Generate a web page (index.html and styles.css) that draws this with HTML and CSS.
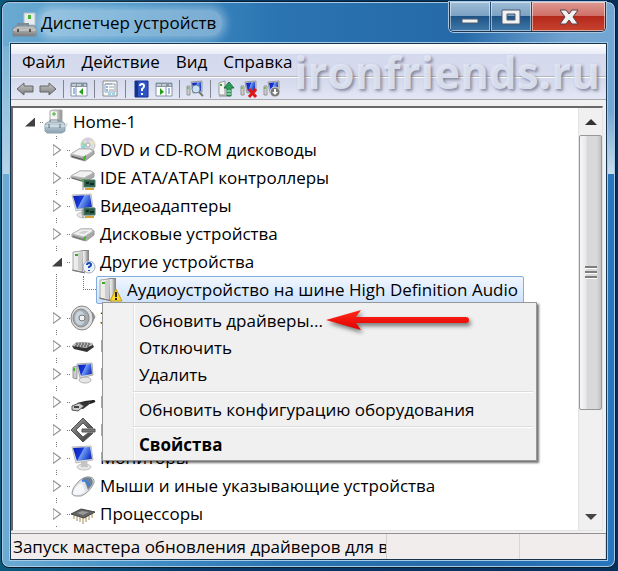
FILE: index.html
```html
<!DOCTYPE html>
<html lang="ru">
<head>
  <meta charset="UTF-8" />
  <meta name="viewport" content="width=device-width, initial-scale=1.0" />
  <title>Диспетчер устройств</title>
  <link rel="stylesheet" href="styles.css">
</head>
<body>
  <svg class="sprite" aria-hidden="true">
    <defs>
      <linearGradient id="metal" x1="0" x2="1"><stop offset="0" stop-color="#fafafa"/><stop offset=".5" stop-color="#d8d8d8"/><stop offset="1" stop-color="#8b8b8b"/></linearGradient>
      <linearGradient id="screen" x1="0" x2="1" y2=".4"><stop offset="0" stop-color="#0a1fb0"/><stop offset=".5" stop-color="#1638d8"/><stop offset=".55" stop-color="#6f9cf5"/><stop offset="1" stop-color="#1a3cc8"/></linearGradient>
      <linearGradient id="box" x1="0" x2="0" y2="1"><stop offset="0" stop-color="#c9d8e0"/><stop offset="1" stop-color="#8ba3b1"/></linearGradient>
      <linearGradient id="gray" x1="0" x2="0" y2="1"><stop offset="0" stop-color="#c9c9c9"/><stop offset="1" stop-color="#7c7c7c"/></linearGradient>
      <linearGradient id="dark" x1="0" x2="1" y2="1"><stop offset="0" stop-color="#a0a0a0"/><stop offset="1" stop-color="#333"/></linearGradient>
      <linearGradient id="red" x1="0" x2="0" y2="1"><stop offset="0" stop-color="#ff2a1a"/><stop offset="1" stop-color="#e00000"/></linearGradient>
    </defs>
    <symbol id="i-computer" viewBox="0 0 26 26">
      <path d="M7 2l3-1h9v14H7z" fill="url(#metal)" stroke="#aaa"/>
      <path d="M8 3h6v11H8z" fill="#f4f4f4"/>
      <path d="M9 5h4M11 3v4" stroke="#3fae2a" stroke-width="1"/>
      <path d="M7 13v-2h9v2" fill="none" stroke="#6f8591" stroke-width="1"/>
      <path d="M2 15l3-2h15l2 2v7l-3 2H4l-2-2z" fill="url(#box)" stroke="#8ba0ab"/>
      <path d="M2 17h20" stroke="#e8f0f4"/>
      <path d="M6 15v4M17 15v4" stroke="#5c717d" stroke-width="1"/>
      <path d="M22 15l3-1-2 5z" fill="#d9d9d9"/>
    </symbol>
    <symbol id="i-drive" viewBox="0 0 26 26">
      <path d="M2 13l9-5h11l2 2v4l-8 6-4-1-10-3z" fill="#a9a9a9" stroke="#999"/>
      <path d="M2 13l9-5h11l1 2-9 6z" fill="#f0f0f0" stroke="#bbb"/>
      <path d="M8 12l5-2h6l-5 3z" fill="#d0d0d0"/>
      <path d="M3 15l10 3v1L3 16z" fill="#666"/>
      <path d="M13 17l3-2v3l-3 2z" fill="#41b82a"/>
    </symbol>
    <symbol id="i-dvd" viewBox="0 0 26 26">
      <circle cx="18" cy="8" r="7" fill="#ddd" stroke="#c5c5c5"/>
      <path d="M18 8l-6-3 1 7z" fill="#9ad7a5"/><path d="M18 8l5-5 2 4z" fill="#e9e3c1"/><path d="M18 8l-3-7h5z" fill="#d9cbe2"/><path d="M18 8l-7 1 2 4z" fill="#8ad5e0"/>
      <circle cx="18" cy="8" r="2" fill="#fff" stroke="#aaa"/>
      <path d="M1 17l8-5h11l4 2v3l-9 7-14-4z" fill="#aaa" stroke="#909090"/>
      <path d="M1 17l8-5h11l3 2-9 6z" fill="#f3f3f3" stroke="#bbb"/>
      <path d="M2 19l11 3v1L2 20z" fill="#4a4a4a"/>
      <path d="M13 20l3-2v4l-3 2z" fill="#41b82a"/>
    </symbol>
    <symbol id="i-chip" viewBox="0 0 26 26">
      <path d="M14 15h11v7H14z" fill="#2b5e4a" stroke="#4b7a66"/>
      <path d="M16 17h3v2h-3zM20 18h4v2h-4z" fill="#142e24"/>
      <path d="M15 23h9v2h-9z" fill="#d8a13a"/>
      <path d="M13 14v11" stroke="#888"/>
    </symbol>
    <symbol id="i-ide" viewBox="0 0 26 26">
      <path d="M1 11l9-5h11l3 2v4l-9 5-14-4z" fill="#aaa" stroke="#a0a0a0"/>
      <path d="M1 11l9-5h11l2 2-9 5z" fill="#f2f2f2" stroke="#bbb"/>
      <path d="M2 13l10 3" stroke="#666"/><path d="M12 14h3v3h-3z" fill="#41c52a"/>
      <use href="#i-chip"/>
    </symbol>
    <symbol id="i-monitor" viewBox="0 0 26 26">
      <ellipse cx="14" cy="22" rx="7" ry="3" fill="#e6e6e6" stroke="#c5c5c5"/>
      <path d="M11 15h6l1 7h-7z" fill="#c4c4c4"/>
      <path d="M2 2l19-1 2 14-17 3z" fill="#e2e2e2" stroke="#bbb"/>
      <path d="M3 3l17-1 2 12-15 2z" fill="url(#screen)"/>
    </symbol>
    <symbol id="i-video" viewBox="0 0 26 26">
      <use href="#i-monitor"/><use href="#i-chip"/>
    </symbol>
    <symbol id="i-tower" viewBox="0 0 26 26">
      <path d="M3 4l10-3h6v20l-5 3-11-2z" fill="#888"/>
      <path d="M12 2h6v18l-5 3z" fill="url(#metal)"/>
      <path d="M3 3l9-1v21l-9-2z" fill="#ececec" stroke="#aaa"/>
      <path d="M8 4l4-1v19l-4-1z" fill="#cdcdcd"/>
      <path d="M5 5h3v2H5z" fill="#39a824"/>
      <path d="M2 21l13 3" stroke="#777"/>
    </symbol>
    <symbol id="i-unknown" viewBox="0 0 26 26">
      <use href="#i-tower"/>
      <circle cx="19" cy="18" r="6" fill="#eef3fb" stroke="#a5afbf"/>
      <path d="M17 16q0-2 2-2t2 2q0 1-2 2v1M19 21v1" fill="none" stroke="#1748b8" stroke-width="2"/>
    </symbol>
    <symbol id="i-warning" viewBox="0 0 26 26">
      <use href="#i-tower"/>
      <path d="M19 12l6 12H13z" fill="#ffd92e" stroke="#c39a10" stroke-linejoin="round"/>
      <path d="M19 15v5M19 21v2" stroke="#222" stroke-width="2"/>
    </symbol>
    <symbol id="i-speaker" viewBox="0 0 26 26">
      <path d="M15 3l8 5 2 4-3 6-8 5z" fill="#888" stroke="#999"/>
      <ellipse cx="12" cy="13" rx="11" ry="12" fill="#dedede" stroke="#888"/>
      <ellipse cx="11" cy="13" rx="8" ry="9" fill="#a3abb5" stroke="#888"/>
      <ellipse cx="10" cy="13" rx="5" ry="7" fill="#c9d3dc"/>
      <circle cx="12" cy="13" r="3" fill="#eef2f5" stroke="#777"/>
    </symbol>
    <symbol id="i-keyboard" viewBox="0 0 26 26">
      <path d="M2 13l5-4 15 1 2 4-7 5-13-3z" fill="#333"/>
      <path d="M2 13l5-4 15 1 1 2-7 3z" fill="#bbb"/>
      <path d="M6 11h14M5 13h14" stroke="#333" stroke-dasharray="2 1"/>
    </symbol>
    <symbol id="i-pc" viewBox="0 0 26 26">
      <path d="M3 6l4-1v13l-4-1z" fill="#ccc" stroke="#999"/><path d="M3 7h2v3H3z" fill="#41b82a"/>
      <ellipse cx="15" cy="19" rx="6" ry="3" fill="#e6e6e6" stroke="#b0b0b0"/>
      <path d="M7 3l15-1 1 12-13 3z" fill="#d9d9d9" stroke="#aaa"/>
      <path d="M8 4l13-1 1 10-11 2z" fill="url(#screen)"/>
    </symbol>
    <symbol id="i-usb" viewBox="0 0 26 26">
      <path d="M15 13l9-1M20 14l5-2" stroke="#222" stroke-width="2"/>
      <path d="M7 14l8-2 6 2-8 6-6-1z" fill="#333"/>
      <path d="M2 17l7-3 5 3-6 5-6-1z" fill="#ccc" stroke="#555"/>
      <path d="M4 18h5" stroke="#444" stroke-width="2"/>
    </symbol>
    <symbol id="i-storage" viewBox="0 0 26 26">
      <path d="M13 1l10 10h-5l-5-5-7 7 7 7 5-4h5L13 25 1 13z" fill="url(#dark)" stroke="#555"/>
      <path d="M12 12h13v3H12z" fill="#777" stroke="#555"/>
    </symbol>
    <symbol id="i-mouse" viewBox="0 0 26 26">
      <path d="M2 20q0-5 6-11 6-6 12-5 5 1 4 6-3 7-9 11-4 3-8 2-5 0-5-3z" fill="#dfe2e7" stroke="#999"/>
      <path d="M12 6q5-3 9-1 3 3 1 7l-4 5-3-8z" fill="#6f8294"/>
      <path d="M12 8q5-2 7 5" fill="none" stroke="#3d7de0" stroke-width="2"/>
      <path d="M3 19q3-7 9-9l3 8q-4 4-8 4-4 0-4-3z" fill="#f6f7f9"/>
    </symbol>
    <symbol id="i-cpu" viewBox="0 0 26 26">
      <path d="M4 14v4M7 15v5M10 16v5M13 17v6M16 16v5M19 15v4M22 13v4" stroke="#a88950"/>
      <path d="M1 13l10-5 14 3-11 6z" fill="#666" stroke="#444"/>
      <path d="M7 12l5-2 7 1-6 3z" fill="#999"/>
    </symbol>
    <symbol id="t-back" viewBox="0 0 18 18">
      <path d="M1 9l7-6v3h9v6H8v3z" fill="url(#gray)" stroke="#666" stroke-linejoin="round"/>
    </symbol>
    <symbol id="t-pane" viewBox="0 0 18 18">
      <path d="M1 3h16v13H1z" fill="#fff" stroke="#8794a3"/><path d="M1 3h16v4H1z" fill="#8794a3"/><path d="M2 5h10M14 5h2" stroke="#fff" stroke-dasharray="4 1"/>
      <path d="M6 7v9" stroke="#8794a3"/><path d="M3 9h2M3 11h2M3 13h2" stroke="#3577c8"/><path d="M13 8v7l-4-3z" fill="#23a01b"/>
    </symbol>
    <symbol id="t-props" viewBox="0 0 18 18">
      <path d="M2 1h14v15H2z" fill="#f8f8f8" stroke="#8b8b8b"/><path d="M4 4h10v8H4z" fill="#fff" stroke="#8ba2bb"/>
      <path d="M4 4h7" stroke="#99a"/><path d="M5 7h2M5 10h2" stroke="#1b6fc8"/><path d="M8 7h5M8 10h5" stroke="#99a"/><path d="M7 14h3M11 14h3" stroke="#3ab5dc"/>
    </symbol>
    <symbol id="t-help" viewBox="0 0 18 18">
      <path d="M3 1h13v16H3z" fill="#2c54c4" stroke="#16318c"/><path d="M3 1h3v16H3z" fill="#16318c"/>
      <path d="M8 6q0-2 2-2t2 2q0 2-2 3v2M10 13v2" fill="none" stroke="#fff" stroke-width="2"/>
    </symbol>
    <symbol id="t-action" viewBox="0 0 18 18">
      <path d="M1 3h16v13H1z" fill="#fff" stroke="#8794a3"/><path d="M1 3h16v4H1z" fill="#8794a3"/><path d="M2 5h10M14 5h2" stroke="#fff" stroke-dasharray="4 1"/>
      <path d="M11 7v9" stroke="#8794a3"/><path d="M13 9h2M13 11h2M13 13h2" stroke="#3577c8"/><path d="M5 8v7l4-3z" fill="#23a01b"/>
    </symbol>
    <symbol id="t-pc" viewBox="0 0 18 18">
      <path d="M1 6h3v9H1z" fill="#ccc" stroke="#999"/><path d="M2 7v2" stroke="#25b51a"/>
      <path d="M5 2l11-1v11l-9 1z" fill="#ccc" stroke="#999"/><path d="M6 3l9-1v9l-7 1z" fill="url(#screen)"/>
    </symbol>
    <symbol id="t-scan" viewBox="0 0 18 18">
      <use href="#t-pc"/><circle cx="10" cy="9" r="4" fill="#c9e2f7" stroke="#6f7f94"/><path d="M13 12l4 4" stroke="#777" stroke-width="2"/>
    </symbol>
    <symbol id="t-update" viewBox="0 0 18 18">
      <path d="M2 3l6-2v14H2z" fill="#f4f4f4" stroke="#999"/><path d="M3 4h2v2H3z" fill="#34a824"/><path d="M2 16h8" stroke="#888"/>
      <path d="M12 2l5 6h-3v8h-4V8H7z" fill="#2f9e5a" stroke="#17713b"/><path d="M10 11h4M10 14h4" stroke="#d6f3df"/>
    </symbol>
    <symbol id="t-remove" viewBox="0 0 18 18">
      <use href="#t-pc"/><path d="M9 9l7 8M16 9l-7 8" stroke="#e01616" stroke-width="3"/>
    </symbol>
    <symbol id="t-disable" viewBox="0 0 18 18">
      <use href="#t-pc"/><circle cx="12" cy="12" r="5" fill="#777" stroke="#ddd"/><path d="M11 9h2v3h2l-3 3-3-3h2z" fill="#fff"/>
    </symbol>
  </svg>

  <div class="window">
    <header class="titlebar">
      <svg class="app-icon" viewBox="0 0 26 26" aria-hidden="true">
        <path d="M12 2h11v12H12z" fill="#e8ecef" stroke="#b5bcc0"/><path d="M16 4h3v4h-3z" fill="#4ab331"/>
        <path d="M6 15v-2h10v2" fill="none" stroke="#808a90" stroke-width="2"/>
        <path d="M1 17l4-2h17l2 3v7H1z" fill="url(#gray)" stroke="#7c878d"/><path d="M1 19h23" stroke="#d5d5d5"/><path d="M6 18v3M18 18v3" stroke="#555" stroke-width="2"/>
      </svg>
      <h1>Диспетчер устройств</h1>
      <div class="caption-buttons">
        <button class="caption-btn" aria-label="Свернуть">
          <svg width="20" height="16" viewBox="0 0 20 16"><path d="M2 10h16v4H2z" fill="#f2f2f2" stroke="#4a5a70"/></svg>
        </button>
        <button class="caption-btn" aria-label="Развернуть">
          <svg width="20" height="16" viewBox="0 0 20 16"><path d="M1 1h18v14H1zM6 5v6h8V5z" fill="#f2f2f2" fill-rule="evenodd" stroke="#4a5a70"/></svg>
        </button>
        <button class="caption-btn close" aria-label="Закрыть">
          <svg width="20" height="16" viewBox="0 0 20 16"><path d="M1 1h6l3 4 3-4h6l-5 7 5 7h-6l-3-4-3 4H1l5-7z" fill="#f2f2f2" stroke="#58404c"/></svg>
        </button>
      </div>
    </header>

    <main class="client">
      <nav class="menubar">
        <button>Файл</button>
        <button>Действие</button>
        <button>Вид</button>
        <button>Справка</button>
      </nav>
      <div class="toolbar">
        <button aria-label="Назад"><svg><use href="#t-back"/></svg></button>
        <button aria-label="Вперед"><svg class="flip"><use href="#t-back"/></svg></button>
        <span class="divider"></span>
        <button aria-label="Дерево консоли"><svg><use href="#t-pane"/></svg></button>
        <span class="divider"></span>
        <button aria-label="Свойства"><svg><use href="#t-props"/></svg></button>
        <span class="divider"></span>
        <button aria-label="Справка"><svg><use href="#t-help"/></svg></button>
        <button aria-label="Панель действий"><svg><use href="#t-action"/></svg></button>
        <span class="divider"></span>
        <button aria-label="Обновить конфигурацию"><svg><use href="#t-scan"/></svg></button>
        <span class="divider"></span>
        <button aria-label="Обновить драйверы"><svg><use href="#t-update"/></svg></button>
        <button aria-label="Удалить"><svg><use href="#t-remove"/></svg></button>
        <button aria-label="Отключить"><svg><use href="#t-disable"/></svg></button>
      </div>

      <div class="tree-panel">
        <div class="tree">
          <div class="row root">
            <button class="expander open" aria-label="Свернуть"></button>
            <span class="stub"></span>
            <span class="item"><svg><use href="#i-computer"/></svg>Home-1</span>
          </div>
          <ul class="branch">
            <li><div class="row"><button class="expander" aria-label="Развернуть"></button><span class="stub"></span><span class="item"><svg><use href="#i-dvd"/></svg>DVD и CD-ROM дисководы</span></div></li>
            <li><div class="row"><button class="expander" aria-label="Развернуть"></button><span class="stub"></span><span class="item"><svg><use href="#i-ide"/></svg>IDE ATA/ATAPI контроллеры</span></div></li>
            <li><div class="row"><button class="expander" aria-label="Развернуть"></button><span class="stub"></span><span class="item"><svg><use href="#i-video"/></svg>Видеоадаптеры</span></div></li>
            <li><div class="row"><button class="expander" aria-label="Развернуть"></button><span class="stub"></span><span class="item"><svg><use href="#i-drive"/></svg>Дисковые устройства</span></div></li>
            <li>
              <div class="row"><button class="expander open" aria-label="Свернуть"></button><span class="stub"></span><span class="item"><svg><use href="#i-unknown"/></svg>Другие устройства</span></div>
              <div class="row child">
                <span class="elbow"></span>
                <span class="item selected"><svg><use href="#i-warning"/></svg>Аудиоустройство на шине High Definition Audio</span>
                <div class="context-menu">
                  <button>Обновить драйверы...</button>
                  <button>Отключить</button>
                  <button>Удалить</button>
                  <hr>
                  <button>Обновить конфигурацию оборудования</button>
                  <hr>
                  <button class="default">Свойства</button>
                  <svg class="arrow" viewBox="0 0 150 30" aria-hidden="true"><path d="M2 13L37 3l-5 7h110q3 0 3 3t-3 3H32l5 7z" fill="url(#red)"/></svg>
                </div>
              </div>
            </li>
            <li><div class="row"><button class="expander" aria-label="Развернуть"></button><span class="stub"></span><span class="item"><svg><use href="#i-speaker"/></svg>Звуковые устройства</span></div></li>
            <li><div class="row"><button class="expander" aria-label="Развернуть"></button><span class="stub"></span><span class="item"><svg><use href="#i-keyboard"/></svg>Клавиатуры</span></div></li>
            <li><div class="row"><button class="expander" aria-label="Развернуть"></button><span class="stub"></span><span class="item"><svg><use href="#i-pc"/></svg>Компьютер</span></div></li>
            <li><div class="row"><button class="expander" aria-label="Развернуть"></button><span class="stub"></span><span class="item"><svg><use href="#i-usb"/></svg>Контроллеры USB</span></div></li>
            <li><div class="row"><button class="expander" aria-label="Развернуть"></button><span class="stub"></span><span class="item"><svg><use href="#i-storage"/></svg>Контроллеры</span></div></li>
            <li><div class="row"><button class="expander" aria-label="Развернуть"></button><span class="stub"></span><span class="item"><svg><use href="#i-monitor"/></svg>Мониторы</span></div></li>
            <li><div class="row"><button class="expander" aria-label="Развернуть"></button><span class="stub"></span><span class="item"><svg><use href="#i-mouse"/></svg>Мыши и иные указывающие устройства</span></div></li>
            <li><div class="row"><button class="expander" aria-label="Развернуть"></button><span class="stub"></span><span class="item"><svg><use href="#i-cpu"/></svg>Процессоры</span></div></li>
          </ul>
        </div>
        <div class="scrollbar">
          <button class="scroll-btn" aria-label="Вверх"><svg viewBox="0 0 12 6"><path d="M0 6l6-6 6 6z" fill="#333"/></svg></button>
          <div class="thumb"><i></i><i></i><i></i></div>
          <div class="track"></div>
          <button class="scroll-btn" aria-label="Вниз"><svg viewBox="0 0 12 6"><path d="M0 0l6 6 6-6z" fill="#444"/></svg></button>
        </div>
      </div>

      <footer class="statusbar">
        <span class="status-text">Запуск мастера обновления драйверов для в</span>
        <span class="status-cell"></span>
        <span class="status-cell small"></span>
      </footer>
    </main>
    <div class="watermark">ironfriends.ru</div>
  </div>
</body>
</html>
```
FILE: styles.css
```css
* {
  box-sizing: border-box;
}
body {
  margin: 0;
  height: 100vh;
  padding: 1px 2px 3px 1px;
  display: flex;
  font-family: 'Open Sans', 'Noto Sans', sans-serif;
  font-size: 17px;
  line-height: 28px;
  color: #000;
  background: linear-gradient(to right, #0c5a7c, #063a68 30%, #06305c);
}
button {
  font: inherit;
  color: inherit;
  background: none;
  border: none;
  padding: 0;
}
.sprite {
  position: absolute;
  width: 0;
  height: 0;
}
.window {
  position: relative;
  flex: 1;
  min-width: 0;
  display: flex;
  flex-direction: column;
  padding: 0 8px 7px;
  border: 1px solid #0b1c2c;
  border-radius: 8px;
  box-shadow: inset 0 0 0 1px #a5cbe6;
  background:
    linear-gradient(rgba(255, 255, 255, 0.35), rgba(255, 255, 255, 0.35) 50%, rgba(255, 255, 255, 0.75)) right 44px / 9px 128px no-repeat,
    linear-gradient(rgba(255, 255, 255, 0.1), rgba(255, 255, 255, 0.5)) left 44px / 9px 128px no-repeat,
    linear-gradient(115deg, transparent 75%, rgba(255, 255, 255, 0.35) 92%) top / 100% 44px no-repeat,
    linear-gradient(to right, #6cabd2, #4593c8 20%, #2b74b2 45%, #2569a8 75%, #2876bd);
}

/* title bar */
.titlebar {
  display: flex;
  align-items: flex-start;
  height: 41px;
  flex-shrink: 0;
}
.app-icon {
  width: 26px;
  height: 26px;
  margin: 9px 3px 0 2px;
}
.titlebar h1 {
  margin: 8px 0 0;
  padding-right: 6px;
  font-size: 17px;
  font-weight: 400;
  line-height: 26px;
  white-space: nowrap;
  border-radius: 12px;
  background: rgba(255, 255, 255, 0.35);
  box-shadow: 0 0 8px 4px rgba(255, 255, 255, 0.35);
}
.caption-buttons {
  display: flex;
  height: 30px;
  margin-left: auto;
  margin-right: 1px;
  border: 1px solid #1d3550;
  border-top: none;
  border-radius: 0 0 5px 5px;
  box-shadow: 0 0 0 1px #a8c6e0;
  overflow: hidden;
}
.caption-btn {
  width: 41px;
  display: flex;
  align-items: center;
  justify-content: center;
  border-right: 1px solid #234a70;
  box-shadow: inset 0 0 0 1px rgba(255, 255, 255, 0.5);
  background: linear-gradient(#9fbdd6, #7ba1c3 48%, #1f5385 50%, #4079ab);
}
.caption-btn.close {
  width: 73px;
  border-right: none;
  background: linear-gradient(#dd9a92, #cf6f66 48%, #b4291c 50%, #c8432f);
}

.client {
  flex: 1;
  min-height: 0;
  display: flex;
  flex-direction: column;
  border: 1px solid #16344e;
  box-shadow: 0 0 0 1px #a5cbe6;
  background: #f0f0f0;
}

/* menu and toolbar */
.menubar {
  display: flex;
  gap: 16px;
  height: 33px;
  flex-shrink: 0;
  padding: 3px 11px 0;
  border-bottom: 1px solid #b5b5b5;
  background: linear-gradient(#fff, #e8ecf7 10px, #d4d9ed 10px, #d6dbee);
}
.toolbar {
  display: flex;
  align-items: center;
  gap: 5px;
  height: 23px;
  flex-shrink: 0;
  padding-left: 5px;
  border-top: 1px solid #fff;
  border-bottom: 1px solid #a9a9b0;
  background: linear-gradient(#d3d8ec, #e3e7f5);
}
.toolbar button,
.toolbar svg {
  width: 18px;
  height: 18px;
  display: block;
}
.toolbar .flip {
  transform: scaleX(-1);
}
.divider {
  width: 1px;
  height: 18px;
  margin: 0 1px;
  background: #80858f;
}
.watermark {
  position: absolute;
  top: 40px;
  right: 15px;
  font-size: 44px;
  line-height: 60px;
  font-weight: 700;
  color: rgba(226, 231, 245, 0.9);
  text-shadow: 2px 2px 3px rgba(80, 85, 110, 0.6);
  pointer-events: none;
}

/* device tree */
.tree-panel {
  flex: 1;
  min-height: 0;
  display: flex;
  margin: 6px 3px 2px 0;
  border: 2px solid #696969;
  border-right: 1px solid #e3e3e3;
  border-bottom: 1px solid #e3e3e3;
  background: #fff;
}
.tree {
  flex: 1;
  min-width: 0;
  overflow: hidden;
  white-space: nowrap;
}
.branch {
  margin: 0;
  padding: 0;
  list-style: none;
}
.branch > li {
  padding-left: 27px;
  background: repeating-linear-gradient(#777 0 1px, #fff 1px 2px) 43px 0 / 1px 100% no-repeat;
}
.row {
  display: flex;
  align-items: center;
  height: 28px;
  padding-left: 10px;
}
.expander {
  width: 14px;
  height: 23px;
  display: flex;
  align-items: center;
  justify-content: center;
  background: #fff;
}
.expander::before {
  content: '';
  width: 9px;
  height: 13px;
  background: #8c8c8c;
  clip-path: polygon(0 0, 100% 50%, 0 100%, 0 0, 1px 2px, 1px 11px, 7px 50%, 1px 2px);
}
.expander.open::before {
  width: 10px;
  height: 9px;
  background: #404040;
  clip-path: polygon(100% 0, 100% 100%, 0 100%);
}
.stub {
  width: 3px;
  margin-left: 3px;
  border-top: 1px dotted #777;
}
.item {
  display: flex;
  align-items: center;
  gap: 4px;
  height: 28px;
}
.item svg {
  width: 26px;
  height: 26px;
}
.child {
  position: relative;
}
.elbow {
  align-self: flex-start;
  width: 13px;
  height: 14px;
  margin-left: 33px;
  border-left: 1px dotted #777;
  border-bottom: 1px dotted #777;
}
.selected {
  padding-right: 5px;
  border: 1px solid #84acdd;
  border-radius: 2px;
  background: linear-gradient(#f0f6fe, #cde2fd);
}

/* context menu */
.context-menu {
  position: absolute;
  z-index: 1;
  top: 26px;
  left: 62px;
  display: flex;
  flex-direction: column;
  width: 435px;
  padding: 4px 3px 2px;
  border: 1px solid #979797;
  background: linear-gradient(to right, #f1f1f1 30px, #e0e0e0 30px, #e0e0e0 31px, #fff 31px, #fff 32px, #f0f0f0 32px);
  box-shadow: 2px 2px 2px rgba(0, 0, 0, 0.55);
}
.context-menu button {
  height: 27px;
  line-height: 27px;
  padding-left: 33px;
  text-align: left;
}
.context-menu .default {
  font-weight: 700;
}
.context-menu hr {
  width: 400px;
  height: 2px;
  margin: 3px 0 3px auto;
  border: none;
  border-top: 1px solid #dcdcdc;
  border-bottom: 1px solid #fff;
}
.arrow {
  position: absolute;
  top: 4px;
  left: 221px;
  width: 150px;
  height: 30px;
  filter: drop-shadow(2px 3px 2px rgba(0, 0, 0, 0.5));
}

/* scrollbar */
.scrollbar {
  width: 24px;
  display: flex;
  flex-direction: column;
  border-left: 1px solid #e3e3e3;
  background: #f0f0f0;
}
.scroll-btn {
  height: 27px;
}
.scroll-btn svg {
  width: 12px;
  height: 6px;
  display: block;
  margin: 0 auto;
}
.thumb {
  flex: 275;
  display: flex;
  flex-direction: column;
  align-items: center;
  justify-content: center;
  gap: 2px;
  border: 1px solid #979797;
  border-radius: 2px;
  background: linear-gradient(to right, #f6f6f6, #e9e9eb 6px, #d6d7d9 7px, #d9dadc 16px, #c0c1c4);
}
.thumb i {
  width: 12px;
  height: 3px;
  border-top: 2px solid #7d7d7d;
  border-bottom: 1px solid #fff;
}
.track {
  flex: 94;
}

/* status bar */
.statusbar {
  display: flex;
  height: 26px;
  flex-shrink: 0;
  line-height: 26px;
  border-top: 1px solid #8f8f8f;
  background: #f1edec;
}
.status-text {
  flex: 1;
  min-width: 0;
  padding-left: 2px;
  overflow: hidden;
  white-space: nowrap;
  border-right: 1px solid #d0d0d0;
}
.status-cell {
  width: 133px;
  border-right: 1px solid #d7d7d7;
}
.status-cell.small {
  width: 86px;
}
```
